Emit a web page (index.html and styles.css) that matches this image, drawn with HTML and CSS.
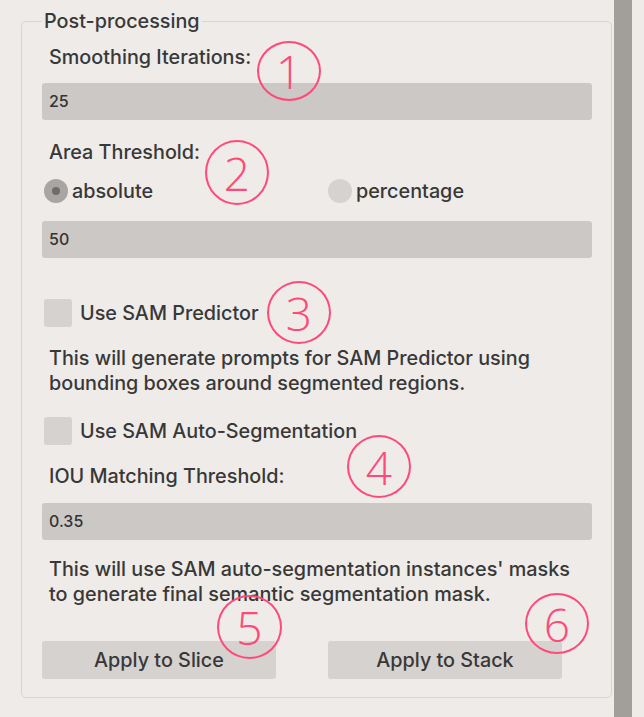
FILE: index.html
```html
<!DOCTYPE html>
<html>
<head>
<meta charset="utf-8">
<link rel="stylesheet" href="styles.css">
</head>
<body>
<div class="page">
  <div class="panel">
    <fieldset class="group">
      <legend class="group-title">Post-processing</legend>
      <div class="label l1">Smoothing Iterations:</div>
      <div class="input">25</div>
      <div class="label l2">Area Threshold:</div>
      <div class="radios">
        <div class="radio-item r-abs"><span class="radio checked"><span class="dot"></span></span><span class="rtext">absolute</span></div>
        <div class="radio-item r-pct"><span class="radio"></span><span class="rtext">percentage</span></div>
      </div>
      <div class="input in2">50</div>
      <div class="check c1"><span class="box"></span><span class="ctext">Use SAM Predictor</span></div>
      <div class="desc d1">This will generate prompts for SAM Predictor using<br>bounding boxes around segmented regions.</div>
      <div class="check c2"><span class="box"></span><span class="ctext">Use SAM Auto-Segmentation</span></div>
      <div class="label l3">IOU Matching Threshold:</div>
      <div class="input in3">0.35</div>
      <div class="desc d2">This will use SAM auto-segmentation instances' masks<br>to generate final semantic segmentation mask.</div>
      <div class="buttons">
        <div class="btn">Apply to Slice</div>
        <div class="btn">Apply to Stack</div>
      </div>
    </fieldset>
  </div>
  <div class="scrollbar"></div>
  <div class="edge"></div>

  <div class="mark m1">1</div>
  <div class="mark m2">2</div>
  <div class="mark m3">3</div>
  <div class="mark m4">4</div>
  <div class="mark m5">5</div>
  <div class="mark m6">6</div>
</div>
</body>
</html>
```

FILE: styles.css
```css
html, body {
  margin: 0;
  padding: 0;
  background: #eeebe8;
}
body {
  font-family: Inter, "Liberation Sans", Arial, sans-serif;
  font-weight: 500;
  color: #383838;
}
.page {
  position: relative;
  width: 644px;
  height: 717px;
  display: flex;
  overflow: hidden;
}
.panel {
  width: 614px;
  padding-left: 21px;
  box-sizing: border-box;
}
.scrollbar {
  width: 18px;
  background: #a29e9a;
}
.edge {
  flex: 1;
  background: #eeebe8;
}
.group {
  margin: 10px 0 0 0;
  width: 591px;
  height: 688px;
  box-sizing: border-box;
  border: 1px solid #d8d4d1;
  border-radius: 5px;
  padding: 0 19px 0 20px;
  min-width: 0;
}
.group-title {
  font-size: 19.8px;
  line-height: 22px;
  padding: 0 2px;
  margin-left: 0;
  color: #383838;
}
.label {
  font-size: 19.8px;
  line-height: 22px;
  padding-left: 7px;
}
.l1 { margin-top: 14px; }
.input {
  height: 37px;
  background: #cbc8c6;
  border-radius: 3px;
  font-size: 16px;
  line-height: 37px;
  padding-left: 7px;
  color: #333;
  margin-top: 15px;
}
.l2 { margin-top: 21px; }
.radios {
  display: flex;
  margin-top: 16px;
  height: 24px;
  align-items: center;
}
.radio-item {
  display: flex;
  align-items: center;
}
.r-abs { margin-left: 2px; width: 284px; }
.radio {
  width: 24px;
  height: 24px;
  border-radius: 50%;
  background: #d6d2cf;
  display: flex;
  align-items: center;
  justify-content: center;
}
.radio.checked { background: #a8a5a2; }
.dot {
  width: 8px;
  height: 8px;
  border-radius: 50%;
  background: #6f6d6b;
}
.rtext {
  font-size: 19.8px;
  margin-left: 4px;
}
.in2 { margin-top: 18px; }
.check {
  display: flex;
  align-items: center;
  height: 28px;
  margin-left: 2px;
}
.c1 { margin-top: 41px; }
.box {
  width: 28px;
  height: 28px;
  border-radius: 3px;
  background: #d6d2cf;
}
.ctext {
  font-size: 19.8px;
  margin-left: 8px;
}
.desc {
  font-size: 19.8px;
  line-height: 25px;
  padding-left: 7px;
}
.d1 { margin-top: 19px; }
.c2 { margin-top: 21px; }
.l3 { margin-top: 20px; }
.in3 { margin-top: 16px; }
.d2 { margin-top: 17px; }
.buttons {
  display: flex;
  gap: 52px;
  margin-top: 34px;
}
.btn {
  width: 234px;
  height: 38px;
  background: #d6d2cf;
  border-radius: 3px;
  font-size: 19.8px;
  line-height: 38px;
  text-align: center;
  color: #383838;
}
.mark {
  position: absolute;
  width: 64px;
  height: 64px;
  box-sizing: border-box;
  border: 2.5px solid #ff4a78;
  border-radius: 50%;
  color: #ff4a78;
  font-family: "Open Sans", sans-serif;
  font-weight: 300;
  font-size: 46px;
  display: flex;
  align-items: center;
  justify-content: center;
  line-height: 1;
}
.m1 { left: 257px; top: 41px; height: 60px; }
.m2 { left: 205px; top: 140px; height: 65px; }
.m3 { left: 267px; top: 281px; height: 63px; }
.m4 { left: 347px; top: 435px; height: 63px; }
.m5 { left: 217px; top: 595px; width: 65px; }
.m6 { left: 525px; top: 593px; height: 61px; }
```
